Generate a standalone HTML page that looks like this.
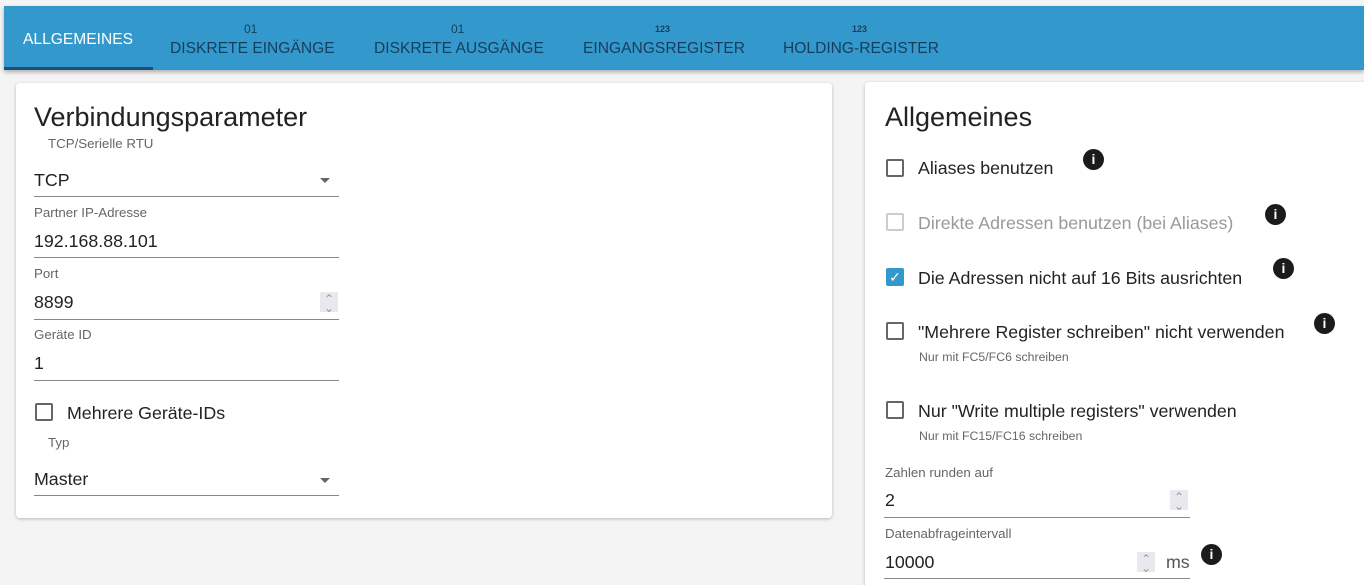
<!DOCTYPE html><html><head><meta charset="utf-8"><style>
*{margin:0;padding:0;box-sizing:border-box}
html,body{width:1364px;height:585px;overflow:hidden}
body{background:#f4f4f4;position:relative;font-family:"Liberation Sans",sans-serif;color:#222}
.t{position:absolute;white-space:nowrap;line-height:1}
.bar{position:absolute;left:4px;top:6px;width:1360px;height:64px;background:#3399cc;box-shadow:0 2px 4px rgba(0,0,0,.3)}
.tab{color:#173d5c;font-size:15.6px}
.sm{color:#173d5c;font-size:12px}
.card{position:absolute;background:#fff;border-radius:4px;box-shadow:0 1px 3px rgba(0,0,0,.25)}
.lbl{font-size:13.3px;color:#666}
.val{font-size:17.8px;color:#222}
.line{position:absolute;height:1px;background:#888}
.cb{position:absolute;width:18px;height:18px;border:2px solid #666;border-radius:2px}
.info{position:absolute;width:21px;height:21px;border-radius:50%;background:#1b1b1b;color:#fff;font:bold 14px/21px "Liberation Sans",sans-serif;text-align:center}
.spin{position:absolute;width:18px;height:20px;background:#e8e8ef;color:#999;font-size:12px;line-height:9px;text-align:center;padding-top:3px}
.arr{position:absolute;width:0;height:0;border-left:5px solid transparent;border-right:5px solid transparent;border-top:5px solid #666}
</style></head><body>
<div class="bar"></div>
<div style="position:absolute;left:4px;top:67px;width:149px;height:3px;background:#1f4f80"></div>
<div class="t" style="left:23px;top:32px;font-size:15.6px;color:#fff">ALLGEMEINES</div>
<div class="t sm" style="left:244px;top:23px">01</div>
<div class="t tab" style="left:170px;top:41px">DISKRETE EINGÄNGE</div>
<div class="t sm" style="left:451px;top:23px">01</div>
<div class="t tab" style="left:374px;top:41px">DISKRETE AUSGÄNGE</div>
<div class="t sm" style="left:655px;top:25px;font-size:9px;font-weight:bold">123</div>
<div class="t tab" style="left:583px;top:41px">EINGANGSREGISTER</div>
<div class="t sm" style="left:852px;top:25px;font-size:9px;font-weight:bold">123</div>
<div class="t tab" style="left:783px;top:41px">HOLDING-REGISTER</div>

<div class="card" style="left:16px;top:83px;width:816px;height:435px"></div>
<div class="card" style="left:865px;top:82px;width:520px;height:520px"></div>

<div class="t" style="left:34px;top:104px;font-size:27px;color:#222">Verbindungsparameter</div>
<div class="t lbl" style="left:48px;top:137px">TCP/Serielle RTU</div>
<div class="t val" style="left:34px;top:172px">TCP</div>
<div class="arr" style="left:320px;top:178px"></div>
<div class="line" style="left:34px;top:196px;width:305px"></div>
<div class="t lbl" style="left:34px;top:206px">Partner IP-Adresse</div>
<div class="t val" style="left:34px;top:233px">192.168.88.101</div>
<div class="line" style="left:34px;top:257px;width:305px"></div>
<div class="t lbl" style="left:34px;top:267px">Port</div>
<div class="t val" style="left:34px;top:294px">8899</div>
<div class="spin" style="left:320px;top:292px">⌃<br>⌄</div>
<div class="line" style="left:34px;top:319px;width:305px"></div>
<div class="t lbl" style="left:34px;top:328px">Geräte ID</div>
<div class="t val" style="left:34px;top:355px">1</div>
<div class="line" style="left:34px;top:380px;width:305px"></div>
<div class="cb" style="left:35px;top:403px"></div>
<div class="t val" style="left:67px;top:405px">Mehrere Geräte-IDs</div>
<div class="t lbl" style="left:48px;top:436px">Typ</div>
<div class="t val" style="left:34px;top:471px">Master</div>
<div class="arr" style="left:320px;top:478px"></div>
<div class="line" style="left:34px;top:495px;width:305px"></div>

<div class="t" style="left:885px;top:104px;font-size:27px;color:#222">Allgemeines</div>
<div class="cb" style="left:886px;top:159px"></div>
<div class="t val" style="left:918px;top:160px">Aliases benutzen</div>
<div class="info" style="left:1083px;top:149px">i</div>
<div class="cb" style="left:886px;top:213px;border-color:#ccc"></div>
<div class="t val" style="left:918px;top:215px;color:#999">Direkte Adressen benutzen (bei Aliases)</div>
<div class="info" style="left:1265px;top:204px">i</div>
<div class="cb" style="left:886px;top:268px;background:#3399cc;border-color:#3399cc;color:#fff;font-size:14px;line-height:14px;text-align:center">✓</div>
<div class="t val" style="left:918px;top:270px">Die Adressen nicht auf 16 Bits ausrichten</div>
<div class="info" style="left:1273px;top:258px">i</div>
<div class="cb" style="left:886px;top:322px"></div>
<div class="t val" style="left:918px;top:324px">"Mehrere Register schreiben" nicht verwenden</div>
<div class="info" style="left:1314px;top:313px">i</div>
<div class="t" style="left:919px;top:351px;font-size:12.3px;color:#666">Nur mit FC5/FC6 schreiben</div>
<div class="cb" style="left:886px;top:401px"></div>
<div class="t val" style="left:918px;top:403px">Nur "Write multiple registers" verwenden</div>
<div class="t" style="left:919px;top:430px;font-size:12.3px;color:#666">Nur mit FC15/FC16 schreiben</div>
<div class="t lbl" style="left:885px;top:466px">Zahlen runden auf</div>
<div class="t val" style="left:885px;top:492px">2</div>
<div class="spin" style="left:1170px;top:490px">⌃<br>⌄</div>
<div class="line" style="left:884px;top:517px;width:306px"></div>
<div class="t lbl" style="left:885px;top:527px">Datenabfrageintervall</div>
<div class="t val" style="left:885px;top:554px">10000</div>
<div class="spin" style="left:1137px;top:552px">⌃<br>⌄</div>
<div class="t val" style="left:1166px;top:554px;color:#555">ms</div>
<div class="info" style="left:1201px;top:544px">i</div>
<div class="line" style="left:884px;top:578px;width:306px"></div>
</body></html>
